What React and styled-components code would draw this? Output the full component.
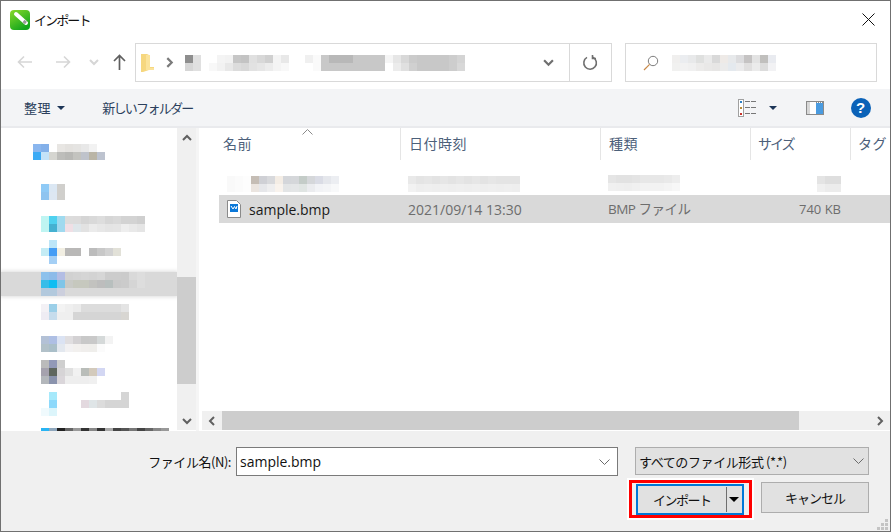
import React from 'react';
import styled, { createGlobalStyle } from 'styled-components';

const GlobalStyle = createGlobalStyle`
  html, body {
    margin: 0;
    padding: 0;
    background: #fff;
  }
  body {
    font-family: "Open Sans", "Noto Sans CJK JP", sans-serif;
    font-size: 13px;
    overflow: hidden;
  }
`

const Window = styled.div`
  width: 891px;
  height: 532px;
  box-sizing: border-box;
  border: 1px solid #707070;
  display: flex;
  flex-direction: column;
  background: #fff;
  overflow: hidden;
`

const TitleBar = styled.div`
  height: 37px;
  flex: none;
  display: flex;
  align-items: center;
  padding: 0 15px 0 9px;
  gap: 5px;
`

const Title = styled.div`
  flex: 1;
  font-family: "Noto Sans CJK JP", sans-serif;
  font-size: 13px;
  letter-spacing: -1.9px;
  margin-left: -1px;
  color: #111;
`

const NavBar = styled.div`
  height: 51px;
  flex: none;
  display: flex;
  align-items: flex-start;
  padding: 5px 13px 0 16px;
  box-sizing: border-box;
`

const NavIcons = styled.div`
  width: 118px;
  height: 38px;
  display: flex;
  align-items: center;
`

const NavButton = styled.span`
  width: ${p => p.$w}px;
  margin-left: ${p => p.$left || 0}px;
  display: flex;
  justify-content: center;
  align-items: center;
`

const AddressBox = styled.div`
  width: 478px;
  height: 39px;
  box-sizing: border-box;
  border: 1px solid #d9d9d9;
  display: flex;
  align-items: center;
`

const AddressPath = styled.div`
  flex: 1;
  display: flex;
  align-items: center;
  padding-left: 5px;
  gap: 10px;
  min-width: 0;
  overflow: hidden;
`

const AddressEnd = styled.div`
  width: ${p => p.$w}px;
  height: 100%;
  box-sizing: border-box;
  display: flex;
  align-items: center;
  justify-content: center;
  padding-left: ${p => (p.$line ? 0 : 2)}px;
  border-left: ${p => (p.$line ? '1px solid #d9d9d9' : 'none')};
`

const SearchBox = styled.div`
  width: 253px;
  height: 39px;
  margin-left: 13px;
  box-sizing: border-box;
  border: 1px solid #d9d9d9;
  display: flex;
  align-items: center;
  padding-left: 17px;
  gap: 13px;
`

const Toolbar = styled.div`
  height: 39px;
  flex: none;
  box-sizing: border-box;
  background: #f3f4f6;
  border-bottom: 2px solid #e9eaed;
  display: flex;
  align-items: center;
  padding: 0 19px 0 23px;
  font-family: "Noto Sans CJK JP", sans-serif;
  font-size: 13px;
  color: #2b3f5c;
`

const ToolButton = styled.div`
  display: flex;
  align-items: center;
  gap: ${p => p.$inner || 6}px;
  margin-right: ${p => p.$gap || 0}px;
  letter-spacing: ${p => (p.$tight ? '-1.7px' : '0.6px')};
`

const Spacer = styled.div`
  flex: 1;
`

const Caret = styled.span`
  width: 0;
  height: 0;
  border-left: 4px solid transparent;
  border-right: 4px solid transparent;
  border-top: 4px solid ${p => p.$color || '#1c3557'};
`

const Main = styled.div`
  flex: 1;
  min-height: 0;
  display: flex;
`

const Sidebar = styled.div`
  width: 176px;
  flex: none;
  padding-top: 8px;
  box-sizing: border-box;
  overflow: hidden;
`

const NavRow = styled.div`
  height: ${p => p.$h}px;
  display: flex;
  align-items: center;
  padding-left: ${p => p.$indent}px;
  background: ${p => (p.$active ? '#d9d9d9' : 'transparent')};
  box-shadow: ${p => (p.$active ? '0 0 4px 1px #dedede' : 'none')};
`

const Mosaic = styled.div`
  display: grid;
  grid-template-columns: repeat(${p => p.$cols}, 8px);
  grid-auto-rows: 8px;
  flex: none;
  filter: blur(0.5px);
`

const Cell = styled.span`
  background: ${p => p.$c};
`

const VScroll = styled.div`
  width: 19px;
  flex: none;
  margin-bottom: 1px;
  background: #f0f0f0;
  display: flex;
  flex-direction: column;
`

const ScrollArrow = styled.div`
  height: ${p => p.$size}px;
  flex: none;
  display: flex;
  align-items: center;
  justify-content: center;
`

const ScrollTrack = styled.div`
  flex: 1;
  display: flex;
  flex-direction: column;
`

const ScrollThumb = styled.div`
  background: #cdcdcd;
  height: ${p => p.$h}px;
  margin-top: ${p => p.$top}px;
`

const Splitter = styled.div`
  width: 3px;
  flex: none;
  background: #f5f5f5;
`

const FilePane = styled.div`
  flex: 1;
  min-width: 0;
  display: flex;
  flex-direction: column;
  padding: 0 0 1px 3px;
  position: relative;
`

const SortMark = styled.span`
  position: absolute;
  left: 103px;
  top: 1px;
  display: flex;
`

const HeaderRow = styled.div`
  height: 32px;
  flex: none;
  display: flex;
  font-family: "Noto Sans CJK JP", sans-serif;
  font-size: 14px;
  color: #4c607a;
  letter-spacing: 0.5px;
`

const HeaderCell = styled.div`
  width: ${p => p.$w}px;
  flex: none;
  box-sizing: border-box;
  border-right: ${p => (p.$last ? 'none' : '1px solid #e5e5e5')};
  padding-left: ${p => p.$pad}px;
  line-height: 31px;
  white-space: nowrap;
  letter-spacing: ${p => (p.$kana ? '-2px' : '0.5px')};
`

const Rows = styled.div`
  flex: 1;
  padding-top: 13px;
  min-height: 0;
`

const FileRow = styled.div`
  height: ${p => p.$h}px;
  margin-left: 17px;
  display: flex;
  align-items: center;
  background: ${p => (p.$selected ? '#d9d9d9' : 'transparent')};
`

const NameCell = styled.div`
  width: 189px;
  flex: none;
  display: flex;
  align-items: center;
  gap: 8px;
  padding-left: 8px;
  box-sizing: border-box;
  color: #1a1a1a;
  font-size: 14px;
`

const DateCell = styled.div`
  width: 200px;
  flex: none;
  color: #6d6d6d;
  font-size: 14px;
`

const TypeCell = styled.div`
  width: 142px;
  flex: none;
  color: #6d6d6d;
  font-size: 13.5px;
  letter-spacing: -0.5px;
  padding-bottom: 2px;
  box-sizing: border-box;
`

const SizeCell = styled.div`
  width: 91px;
  flex: none;
  display: flex;
  justify-content: flex-end;
  color: #6d6d6d;
  font-size: 13px;
`

const HScroll = styled.div`
  height: 19px;
  flex: none;
  display: flex;
  background: #f0f0f0;
`

const HArrow = styled.div`
  width: ${p => p.$w}px;
  flex: none;
  display: flex;
  align-items: center;
  justify-content: center;
`

const HTrack = styled.div`
  flex: 1;
`

const HThumb = styled.div`
  width: 577px;
  height: 19px;
  background: #cdcdcd;
`

const Footer = styled.div`
  height: 100px;
  flex: none;
  background: #f0f0f0;
  box-sizing: border-box;
  padding: 16px 21px 0 0;
  position: relative;
  font-family: "Noto Sans CJK JP", sans-serif;
  font-size: 13px;
  color: #111;
`

const FooterRow = styled.div`
  display: flex;
  justify-content: flex-end;
  align-items: center;
  margin-top: ${p => p.$top || 0}px;
`

const FieldLabel = styled.label`
  margin-right: 5px;
  letter-spacing: -0.45px;
`

const FileInput = styled.div`
  width: 382px;
  height: 29px;
  box-sizing: border-box;
  border: 1px solid #7a7a7a;
  background: #fff;
  display: flex;
  align-items: center;
  justify-content: space-between;
  padding: 0 7px 0 3px;
  margin-right: 17px;
  font-family: "Open Sans", sans-serif;
  font-size: 14px;
`

const TypeSelect = styled.div`
  width: 234px;
  height: 28px;
  margin-bottom: 1px;
  box-sizing: border-box;
  border: 1px solid #adadad;
  background: #e1e1e1;
  display: flex;
  align-items: center;
  justify-content: space-between;
  padding: 0 4px 0 3px;
  letter-spacing: -0.4px;
`

const Highlight = styled.div`
  border: 3px solid #f00;
  outline: 2px solid #fff;
  padding: 1px 5px 0 4px;
  margin-right: 9px;
  display: flex;
`

const SplitButton = styled.div`
  width: 108px;
  height: 31px;
  box-sizing: border-box;
  border: 2px solid #0078d7;
  background: #e1e1e1;
  display: flex;
  align-items: center;
`

const SplitLabel = styled.div`
  flex: 1;
  padding-left: 15px;
  letter-spacing: -1.5px;
`

const SplitDivider = styled.div`
  width: 1px;
  height: 25px;
  background: #6f6f6f;
  margin-right: 2px;
`

const ButtonCaret = styled.span`
  width: 0;
  height: 0;
  margin-right: 3px;
  border-left: 5px solid transparent;
  border-right: 5px solid transparent;
  border-top: 5px solid #000;
`

const Button = styled.div`
  width: 108px;
  height: 31px;
  margin-top: -3px;
  box-sizing: border-box;
  border: 1px solid #adadad;
  background: #e1e1e1;
  display: flex;
  align-items: center;
  justify-content: center;
  letter-spacing: -1px;
`

const Grip = styled.svg`
  position: absolute;
  right: 1px;
  bottom: 0;
`

const Chevron = ({ dir = 'down', color = '#606060', size = 10, width = 2 }) => {
  const paths = {
    up: 'M1 7 L5 3 L9 7',
    down: 'M1 3 L5 7 L9 3',
    left: 'M7 1 L3 5 L7 9',
    right: 'M3 1 L7 5 L3 9',
  };
  return (
    <svg width={size} height={size} viewBox="0 0 10 10" fill="none" stroke={color} strokeWidth={width}>
      <path d={paths[dir]} />
    </svg>
  );
};

const AppLogo = () => (
  <svg width="20" height="20" viewBox="0 0 20 20">
    <defs>
      <linearGradient id="logoGreen" x1="0" y1="0" x2="0.6" y2="1">
        <stop offset="0" stopColor="#8ad92a" />
        <stop offset="1" stopColor="#12a61c" />
      </linearGradient>
    </defs>
    <rect width="20" height="20" rx="4" fill="url(#logoGreen)" />
    <path d="M6 4 L16 13" stroke="#fff" strokeWidth="4" strokeLinecap="round" />
    <path d="M13.5 11 L16 13" stroke="#9a9a9a" strokeWidth="3" />
  </svg>
);

const ArrowIcon = ({ dir, color }) => (
  <svg width="16" height="14" viewBox="0 0 16 14" fill="none" stroke={color} strokeWidth="1.6">
    {dir === 'left' && <path d="M15 7 H1.5 M7 1.5 L1.5 7 L7 12.5" />}
    {dir === 'right' && <path d="M1 7 H14.5 M9 1.5 L14.5 7 L9 12.5" />}
  </svg>
);

const UpArrow = () => (
  <svg width="13" height="16" viewBox="0 0 13 16" fill="none" stroke="#5f5f5f" strokeWidth="1.7">
    <path d="M6.5 16 V1.5 M1 7 L6.5 1.5 L12 7" />
  </svg>
);

const FolderIcon = () => (
  <svg width="13" height="18" viewBox="0 0 13 18">
    <path d="M0 0 H6 L8 1 V13 H13 V16 L8 16 L2 18 H0 Z" fill="#f6d77f" />
    <path d="M5 1 H9 V14 H13 V16 H5 Z" fill="#fbe39b" />
  </svg>
);

const RefreshIcon = () => (
  <svg width="16" height="16" viewBox="0 0 16 16" fill="none" stroke="#6f6f6f" strokeWidth="1.6">
    <path d="M11 2.3 A6.3 6.3 0 1 1 5 2.4" />
    <path d="M10.5 0 V3.5 H14" />
  </svg>
);

const SearchIcon = () => (
  <svg width="16" height="16" viewBox="0 0 16 16" fill="none">
    <circle cx="10" cy="6" r="4.7" stroke="#7d7d7d" strokeWidth="1" />
    <path d="M6.6 9.4 L1 15" stroke="#c98a4a" strokeWidth="1.2" />
  </svg>
);

const ViewIcon = () => (
  <svg width="19" height="18" viewBox="0 0 19 18">
    <rect x="0.5" y="0.5" width="5" height="17" fill="#fff" stroke="#a0a0a0" />
    <rect x="2" y="2" width="2" height="2" fill="#2b7fc4" />
    <rect x="2" y="8" width="2" height="2" fill="#b58a3a" />
    <rect x="2" y="14" width="2" height="2" fill="#c7332b" />
    <path d="M7 2.5 H18 M7 8.5 H18 M7 14.5 H18" stroke="#777" strokeDasharray="5 1" />
  </svg>
);

const PaneIcon = () => (
  <svg width="18" height="14" viewBox="0 0 18 14">
    <rect x="0.5" y="0.5" width="17" height="13" fill="#fff" stroke="#8a8a8a" />
    <rect x="1" y="1" width="3" height="12" fill="#d7d7d7" />
    <rect x="10" y="2" width="7" height="11" fill="#4a9be0" />
    <path d="M10 1.5 H17" stroke="#8a8a8a" strokeDasharray="1 1" />
  </svg>
);

const HelpIcon = () => (
  <svg width="20" height="20" viewBox="0 0 20 20">
    <circle cx="10" cy="10" r="10" fill="#0b62b8" />
    <text x="10" y="15" textAnchor="middle" fill="#fff" fontSize="15" fontWeight="700" fontFamily="Liberation Sans, sans-serif">?</text>
  </svg>
);

const BmpIcon = () => (
  <svg width="14" height="18" viewBox="0 0 14 18">
    <path d="M0.5 0.5 H9.5 L13.5 4.5 V17.5 H0.5 Z" fill="#fff" stroke="#8a8a8a" />
    <rect x="3" y="4" width="8" height="8" fill="#0b78d8" />
    <path d="M4 6 L6 9 L7.5 6.5 L9 9 L10 6" stroke="#fff" fill="none" />
  </svg>
);

const SmallChevron = () => (
  <svg width="11" height="6" viewBox="0 0 11 6" fill="none" stroke="#6b6b6b">
    <path d="M0.5 0.5 L5.5 5.5 L10.5 0.5" />
  </svg>
);

const w = '#ffffff';

const pathCells = [
  ['#8e8e8e', '#e0e0e0', w, w, '#f4f4f4', '#f2f2f2', '#c6c6c6', '#c3c3c3', '#e0e0e0', '#d8d8d8', '#d0d0d0', '#f4f4f4', '#e8e8e8', w, w, '#f0f0f0', '#fafafa',
    '#c8c8c8', '#b8b8b8', '#b8b8b8', '#b8b8b8', '#c8c8c8', '#c8c8c8', '#c8c8c8', '#c8c8c8', '#f5f5f5', '#e6e6e6', '#d8d8d8', '#cbcbcb', '#c8c8c8', '#c8c8c8', '#c8c8c8', '#c8c8c8', '#cdcdcd', '#d4d4d4'],
  ['#d6d6d6', '#e0e0e0', w, '#f8f8f8', '#f2f2f2', '#e8e8e8', '#dcdcdc', '#d8d8d8', '#e2e2e2', '#e6e6e6', '#ececec', '#f4f4f4', '#f8f8f8', w, w, w, '#fafafa',
    '#c8c8c8', '#c8c8c8', '#c8c8c8', '#c8c8c8', '#c8c8c8', '#c8c8c8', '#c8c8c8', '#c8c8c8', w, '#ececec', '#e0e0e0', '#d0d0d0', '#c8c8c8', '#c8c8c8', '#c8c8c8', '#c8c8c8', '#cdcdcd', '#d8d8d8'],
];

const searchCells = [
  ['#f0efee', '#ebedf0', '#e8e9ea', '#dfe0df', '#eaeaea', '#d9d9d9', '#eeeae7', '#e7e9eb', '#dcdcde', '#c5c3c3', '#e3e3e3', '#c0bfbd', '#e9ebf0'],
  ['#f1f1f0', '#f2f2f2', '#f0f0f0', '#ecebea', '#e9e8e7', '#e7e6e5', '#ebebeb', '#e4e9ee', '#ebebec', '#e0dfdf', '#ebebeb', '#dcdcdc', '#f2f2f4'],
];

const navRows = [
  { h: 32, indent: 32, cols: 10, cells: [
    ['#8ab6ee', '#83b0e9', w, '#e8e6e3', '#e4e2df', '#e5e4e2', '#e8e8e8', '#f2f2f2', w, w],
    ['#3baaf5', '#c4e2f8', '#d5d5d0', '#bdbdba', '#b8b8b5', '#c3c3bf', '#bfc3cb', '#bab5a6', '#bdc3cf', w],
  ] },
  { h: 48, indent: 40, cols: 3, cells: [
    ['#8fcaf6', '#dbe7f3', '#d0cfcc'],
    ['#8fc4f0', '#dde7f2', '#d0cfcc'],
  ] },
  { h: 16, indent: 40, cols: 14, cells: [
    ['#bff5f2', '#4fd1ef', '#9fdaef', '#dcdcdc', '#dcdbdb', '#d5d5d5', '#d9d9d9', '#dddddd', '#d6d6d6', '#d9d9d9', '#d3d3d3', '#d3d3d3', '#cfcfcf', w],
    ['#bff5f2', '#45b1d1', '#a0d9ef', '#f0dfe5', '#dfe6ea', '#e2e2e2', '#ebebeb', '#e7e7e7', '#e4e4e4', '#e5e5e5', '#eeeeee', '#e9e9e9', '#e5e5e5', w],
  ] },
  { h: 40, indent: 40, cols: 11, cells: [
    [w, '#bde6f8', w, w, w, w, w, w, w, w, w],
    ['#c4ecf5', '#459df5', '#f2efe3', '#b9b8b7', '#b9b8b7', w, '#bcbcbc', '#c8c8c8', '#d2d2d2', '#e2e1d8', w],
    [w, '#a4cff5', w, w, w, w, w, w, w, w, w],
  ] },
  { h: 24, indent: 40, active: true, cols: 13, cells: [
    ['#8dc1ec', '#8dbbe9', '#b3bde4', '#d1d1d1', '#d3d3d3', '#d5d5d5', '#d3d3d3', '#d6d6d6', '#cccccc', '#cccccc', '#cbcbcb', '#d9d9d9', '#dddddd'],
    ['#37bde9', '#0fbdf2', '#7fc5e8', '#c9cac6', '#c6c8be', '#c6c8be', '#c2c2bf', '#bdbdbd', '#b8bfbe', '#c9c9c9', '#cbcbcb', '#d5d5d5', '#dddddd'],
    ['#b2c9dd', '#b2c9dd', '#cccfdd', '#d9d9d9', '#d9d9d9', '#d9d9d9', '#d9d9d9', '#d9d9d9', '#d9d9d9', '#d9d9d9', '#d9d9d9', '#d9d9d9', '#d9d9d9'],
  ] },
  { h: 32, indent: 40, cols: 11, cells: [
    ['#f3f1f5', '#9bcfe8', '#f3f3f3', '#efefef', '#ebebeb', '#dcdcdc', '#dcdcdc', '#dcdcdc', '#dcdcdc', '#dcdcdc', '#e4e4e4'],
    ['#eeecf3', '#c6dcec', '#efefef', '#efefef', '#d5d5d5', '#d5d5d5', '#d5d5d5', '#d5d5d5', '#d5d5d5', '#d5d5d5', '#d8d6d2'],
  ] },
  { h: 32, indent: 40, cols: 9, cells: [
    ['#b3c1d6', '#aebfe4', '#dbe3f3', '#e0dee0', '#d3d1d3', '#c8c8c8', '#c9c9c9', '#d5d9d9', '#f3f3f3'],
    ['#b2c1c9', '#aabfc9', '#e3e8ef', '#f2f1f2', '#f2f0ee', '#f0eeec', '#efeeeb', '#fbfbfb', w],
  ] },
  { h: 24, indent: 40, cols: 9, cells: [
    ['#bbbbbb', '#9299b8', '#cfcfcf', w, w, w, w, w, w],
    ['#a5a2ae', '#5f675f', '#d6d4d6', '#e0e0e0', '#f1f1f1', '#b9bdb9', '#d3cabc', '#d3d7f3', w],
    ['#b3b7bb', '#8a93ad', '#dad6da', '#eeeeee', '#eeeeee', '#eeeeee', '#f0f0f0', w, w],
  ] },
  { h: 40, indent: 40, cols: 11, cells: [
    [w, '#a6e9fb', w, w, w, w, w, w, w, w, '#d5d5d5'],
    [w, '#8dd9fb', w, w, w, '#e3d9df', '#dfe5e7', '#dcdcdc', '#d5d5d5', '#d5d5d5', '#d5d5d5'],
    ['#f0fafd', '#dcf5fb', w, w, w, w, w, w, w, w, w],
  ] },
  { h: 16, indent: 40, cols: 17, cells: [
    ['#29b4f3', '#8fa7bd', '#222222', '#666666', '#999999', '#333333', '#888888', '#333333', '#aaaaaa', '#444444', '#555555', '#777777', '#444444', '#666666', '#888888', '#999999', w],
  ] },
];

const blurredName = [
  ['#f9f9f9', '#fbfbfb', '#fdfdfd', '#c5bdb5', '#cfd0d5', '#d8d9dc', '#f4ede5', '#d4d6da', '#d5d7da', '#c4ccc8', '#d5d7da', '#dadce5', '#e5e7ec', '#eceef2'],
  ['#f9f9f9', '#fbfbfb', '#fdfdfd', '#ebe5e0', '#e6e7ea', '#eeeeef', '#f9f3ed', '#e3e5e6', '#e4e6e7', '#e0e5e3', '#ebecef', '#f2f3f6', '#f4f5f7', '#f8f9fa'],
];
const blurredDate = [
  ['#e9e9e9', '#e4e4e4', '#e6e6e6', '#e3e3e3', '#e6e6e6', '#e3e3e3', '#e6e6e6', '#e3e3e3', '#e6e6e6', '#e3e3e3', '#e6e6e6', '#e4e4e4', '#e4e4e4', '#e4e4e4'],
  ['#f2f2f2', '#eeeeee', '#efefef', '#eeeeee', '#efefef', '#eeeeee', '#efefef', '#eeeeee', '#efefef', '#eeeeee', '#efefef', '#eeeeee', '#efefef', '#eeeeee'],
];
const blurredType = [
  ['#e5e5e5', '#e2e2e2', '#e2e2e2', '#e4e4e4', '#e7e7e7', '#e7e7e7', '#e7e7e7', '#e9e9e9', '#ededed'],
  ['#f0f0f0', '#efefef', '#eeeeee', '#f0f0f0', '#f2f2f2', '#f2f2f2', '#f2f2f2', '#f4f4f4', '#f7f7f7'],
];
const blurredSize = [['#e4e4e4', '#dedede', '#dedede'], ['#f0f0f0', '#ececec', '#ececec']];

const MosaicBlock = ({ cols, cells }) => (
  <Mosaic $cols={cols}>
    {cells.flat().map((c, i) => <Cell key={i} $c={c} />)}
  </Mosaic>
);

export default function App() {
  return (
    <>
      <GlobalStyle />
      <Window>
        <TitleBar>
          <AppLogo />
          <Title>インポート</Title>
          <svg width="13" height="13" viewBox="0 0 13 13" stroke="#111" strokeWidth="1">
            <path d="M0.5 0.5 L12.5 12.5 M12.5 0.5 L0.5 12.5" />
          </svg>
        </TitleBar>

        <NavBar>
          <NavIcons>
            <NavButton $w={16}><ArrowIcon dir="left" color="#d6d6d6" /></NavButton>
            <NavButton $w={16} $left={22}><ArrowIcon dir="right" color="#d6d6d6" /></NavButton>
            <NavButton $w={10} $left={18}><Chevron color="#d6d6d6" /></NavButton>
            <NavButton $w={13} $left={14}><UpArrow /></NavButton>
          </NavIcons>
          <AddressBox>
            <AddressPath>
              <FolderIcon />
              <Chevron dir="right" color="#7b7b7b" size={11} />
              <MosaicBlock cols={35} cells={pathCells} />
            </AddressPath>
            <AddressEnd $w={42}><Chevron color="#6f6f6f" size={11} /></AddressEnd>
            <AddressEnd $w={42} $line><RefreshIcon /></AddressEnd>
          </AddressBox>
          <SearchBox>
            <SearchIcon />
            <MosaicBlock cols={13} cells={searchCells} />
          </SearchBox>
        </NavBar>

        <Toolbar>
          <ToolButton $gap={37}>整理<Caret /></ToolButton>
          <ToolButton $tight>新しいフォルダー</ToolButton>
          <Spacer />
          <ToolButton $gap={29} $inner={12}>
            <ViewIcon />
            <Caret />
          </ToolButton>
          <ToolButton $gap={27}><PaneIcon /></ToolButton>
          <ToolButton><HelpIcon /></ToolButton>
        </Toolbar>

        <Main>
          <Sidebar>
            {navRows.map((r, i) => (
              <NavRow key={i} $h={r.h} $indent={r.indent} $active={r.active}>
                <MosaicBlock cols={r.cols} cells={r.cells} />
              </NavRow>
            ))}
          </Sidebar>
          <VScroll>
            <ScrollArrow $size={19}><Chevron dir="up" color="#606060" /></ScrollArrow>
            <ScrollTrack>
              <ScrollThumb $top={130} $h={107} />
            </ScrollTrack>
            <ScrollArrow $size={19}><Chevron color="#606060" /></ScrollArrow>
          </VScroll>
          <Splitter />
          <FilePane>
            <SortMark>
              <svg width="11" height="6" viewBox="0 0 11 6" fill="none" stroke="#8a8a8a">
                <path d="M0.5 5.5 L5.5 0.5 L10.5 5.5" />
              </svg>
            </SortMark>
            <HeaderRow>
              <HeaderCell $w={199} $pad={21}>名前</HeaderCell>
              <HeaderCell $w={200} $pad={8}>日付時刻</HeaderCell>
              <HeaderCell $w={150} $pad={8}>種類</HeaderCell>
              <HeaderCell $w={100} $pad={7} $kana>サイズ</HeaderCell>
              <HeaderCell $w={40} $pad={7} $last>タグ</HeaderCell>
            </HeaderRow>
            <Rows>
              <FileRow $h={22}>
                <NameCell><MosaicBlock cols={14} cells={blurredName} /></NameCell>
                <DateCell><MosaicBlock cols={14} cells={blurredDate} /></DateCell>
                <TypeCell><MosaicBlock cols={9} cells={blurredType} /></TypeCell>
                <SizeCell><MosaicBlock cols={3} cells={blurredSize} /></SizeCell>
              </FileRow>
              <FileRow $h={28} $selected>
                <NameCell><BmpIcon />sample.bmp</NameCell>
                <DateCell>2021/09/14 13:30</DateCell>
                <TypeCell>BMP ファイル</TypeCell>
                <SizeCell>740 KB</SizeCell>
              </FileRow>
            </Rows>
            <HScroll>
              <HArrow $w={20}><Chevron dir="left" color="#606060" /></HArrow>
              <HTrack><HThumb /></HTrack>
              <HArrow $w={20}><Chevron dir="right" color="#606060" /></HArrow>
            </HScroll>
          </FilePane>
        </Main>

        <Footer>
          <FooterRow>
            <FieldLabel>ファイル名(N):</FieldLabel>
            <FileInput>sample.bmp<SmallChevron /></FileInput>
            <TypeSelect>すべてのファイル形式 (*.*)<SmallChevron /></TypeSelect>
          </FooterRow>
          <FooterRow $top={4}>
            <Highlight>
              <SplitButton>
                <SplitLabel>インポート</SplitLabel>
                <SplitDivider />
                <ButtonCaret />
              </SplitButton>
            </Highlight>
            <Button>キャンセル</Button>
          </FooterRow>
          <Grip width="12" height="12" viewBox="0 0 12 12" fill="#c4c4c4">
            <rect x="8" y="0" width="3" height="3" />
            <rect x="4" y="4" width="3" height="3" />
            <rect x="8" y="4" width="3" height="3" />
            <rect x="0" y="8" width="3" height="3" />
            <rect x="4" y="8" width="3" height="3" />
            <rect x="8" y="8" width="3" height="3" />
          </Grip>
        </Footer>
      </Window>
    </>
  );
}
